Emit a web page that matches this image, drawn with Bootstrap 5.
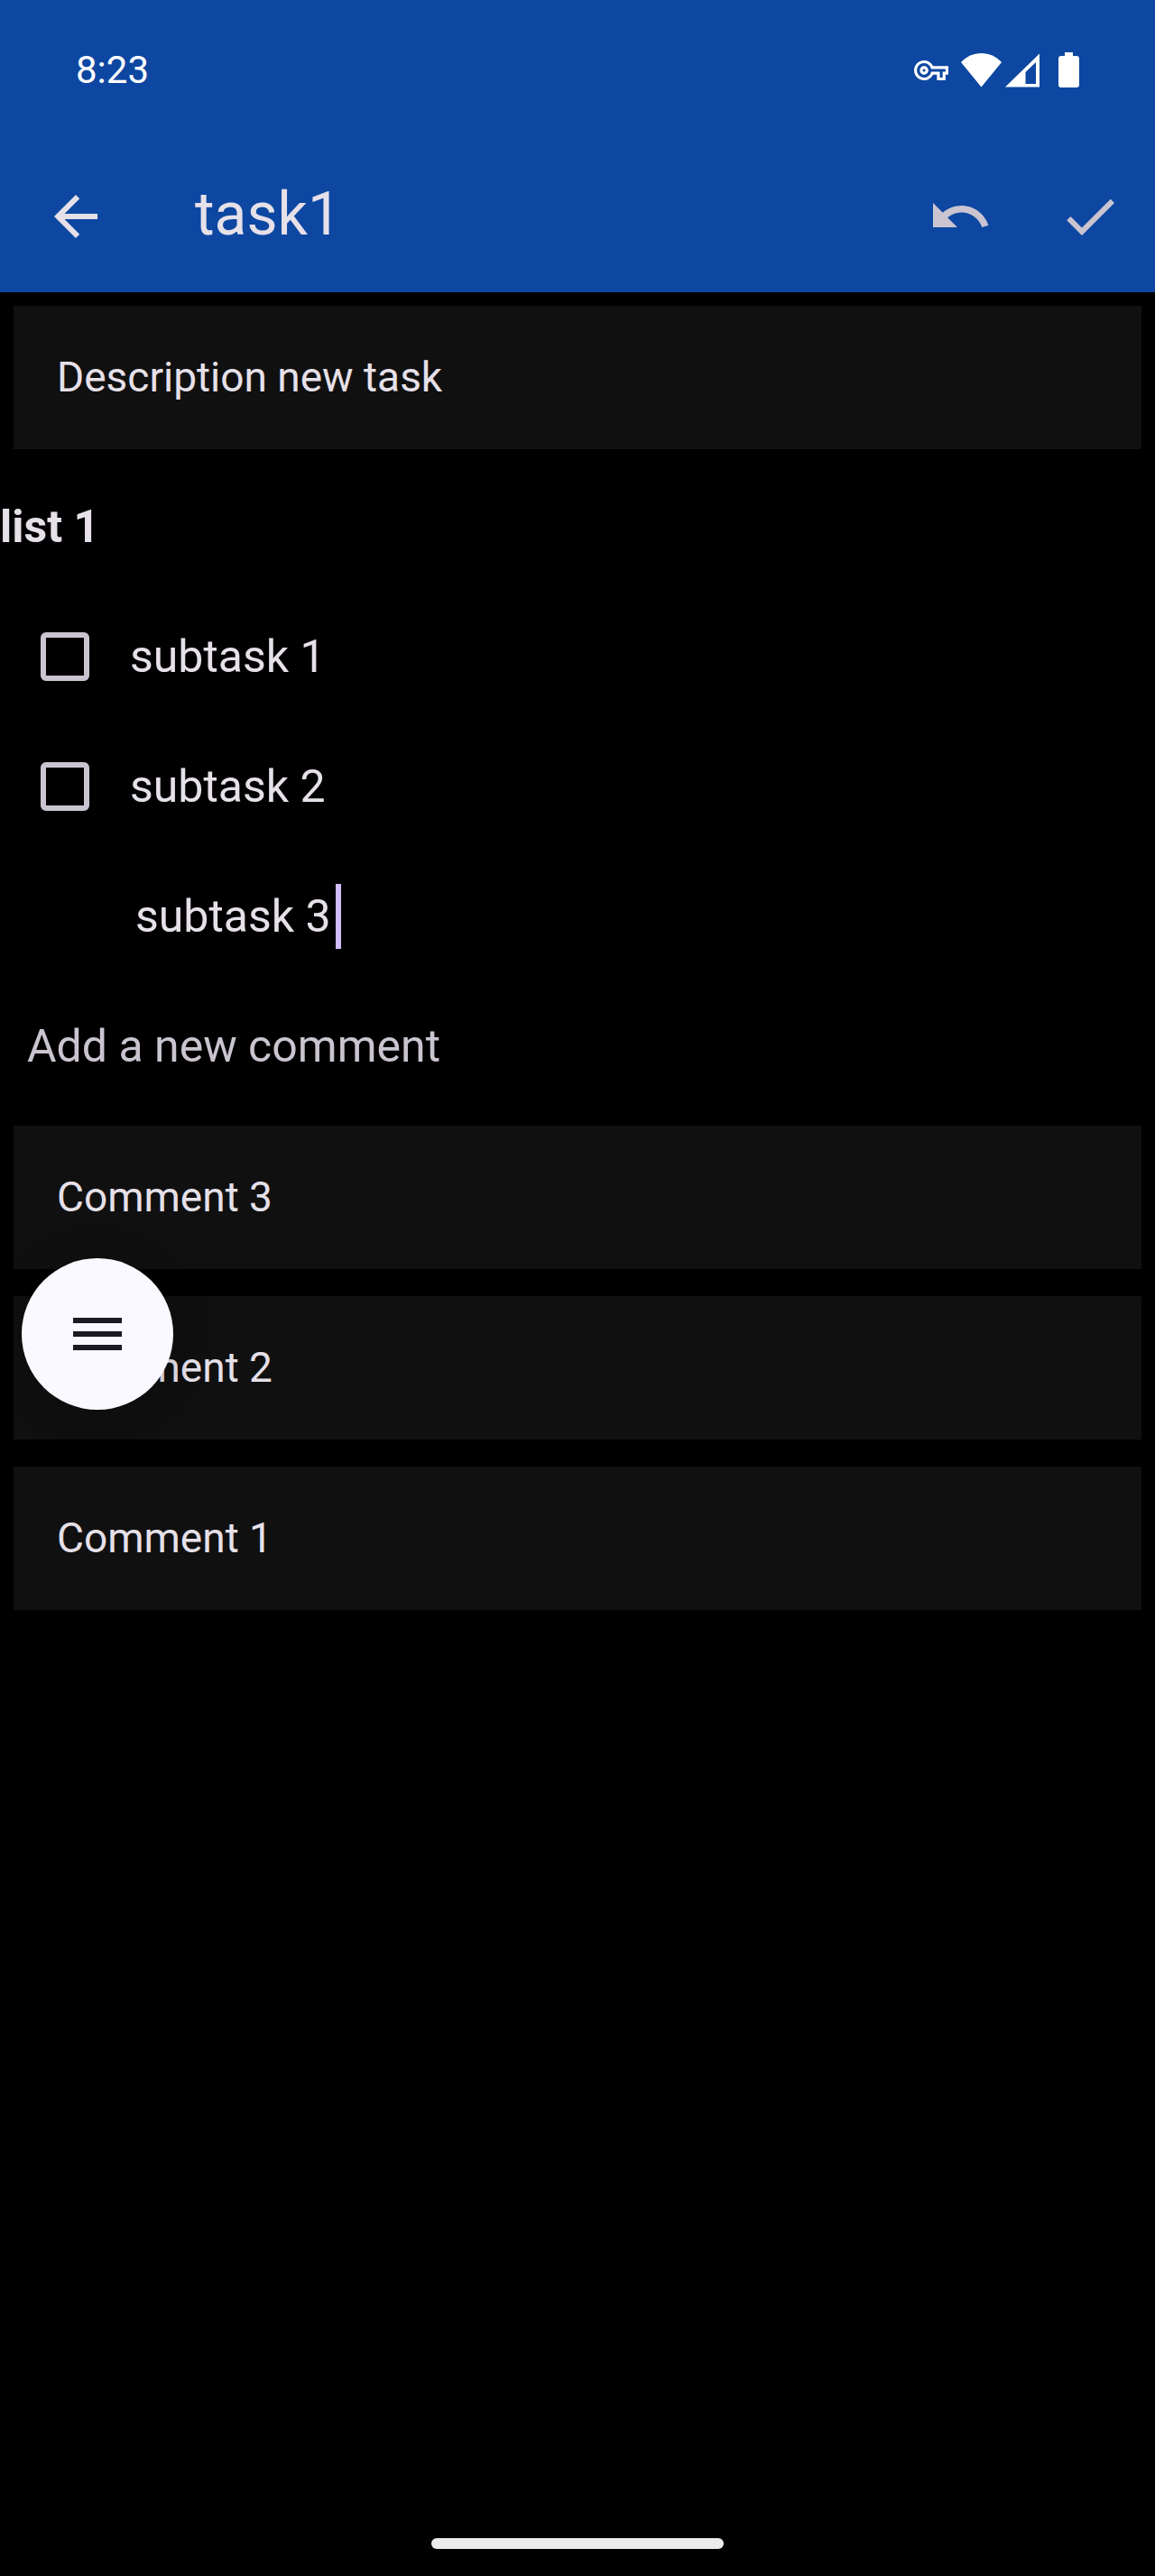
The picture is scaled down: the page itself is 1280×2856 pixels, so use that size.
<!DOCTYPE html>
<html lang="en">
<head>
<meta charset="utf-8">
<meta name="viewport" content="width=device-width, initial-scale=1">
<title>task1</title>
<link href="https://cdn.jsdelivr.net/npm/bootstrap@5.3.0/dist/css/bootstrap.min.css" rel="stylesheet">
<style>
  body { background: #000; color: #e6e0e9; font-family: Roboto, "Noto Sans", sans-serif; font-size: 50px; line-height: 72px; }
  .app-header { background: #0d47a1; }
  .status-bar { height: 156px; padding: 0 84px; color: #fff; font-size: 42px; }
  .gap-status { margin-left: 14px; }
  .toolbar { height: 168px; }
  .tool-btn { width: 144px; height: 144px; padding: 0; border: 0; color: #cac4d0; }
  .tool-btn.back { width: 168px; color: #e6e0e9; }
  .tool-btn svg, .fab svg { width: 72px; height: 72px; }
  .tool-title { font-size: 66px; line-height: 84px; padding: 0 0 4px 48px; }
  .note-card { background: #101010; border: 0; border-radius: 0; margin: 15px; padding: 48px; color: #e6e0e9; font-size: 46px; line-height: 63px; }
  .note-card + .note-card { margin-top: 30px; }
  .line-row { height: 144px; padding-bottom: 2px; }
  .list-title { font-size: 50px; line-height: 72px; }
  .subtask { padding-left: 45px; gap: 45px; }
  .subtask .form-check-input { width: 54px; height: 54px; border: 6px solid #cac4d0; border-radius: 6px; background-color: transparent; }
  .subtask .form-check-input:checked { background-color: #d0bcff; border-color: #d0bcff; }
  .subtask-edit { padding-left: 150px; }
  .plain-input, .plain-input:focus { background: transparent; border: 0; border-radius: 0; box-shadow: none; padding: 0; height: 72px; color: #e6e0e9; font-size: 50px; line-height: 72px; }
  .plain-input::placeholder { color: #cac4d0; opacity: 1; }
  .subtask-edit .plain-input { width: 222px; }
  .caret { width: 6px; height: 72px; background: #d0bcff; }
  .new-comment { padding-left: 30px; padding-right: 30px; }
  .fab { top: 162px; left: 24px; width: 168px; height: 168px; padding: 0; border: 0; background: #faf9ff; color: #1b1b21; box-shadow: 0 18px 30px rgba(0,0,0,.08), 0 3px 54px rgba(0,0,0,.1); }
  .fab:hover { background: #fff; color: #1b1b21; }
  .home-bar { width: 324px; height: 12px; margin-bottom: 30px; background: #ebebeb; }
</style>
</head>
<body class="d-flex flex-column min-vh-100">
<header class="app-header">
  <div class="status-bar d-flex align-items-center justify-content-between">
    <span>8:23</span>
    <div class="d-flex align-items-center">
      <svg width="38" height="38" viewBox="0 0 24 24" fill="currentColor" aria-hidden="true"><path d="M22 19h-6v-4h-2.68c-1.14 2.42-3.6 4-6.32 4-3.86 0-7-3.14-7-7s3.14-7 7-7c2.72 0 5.17 1.58 6.32 4H24v6h-2v4zm-4-2h2v-4h2v-2H11.94l-.23-.67C11.01 8.34 9.11 7 7 7c-2.76 0-5 2.24-5 5s2.24 5 5 5c2.11 0 4.01-1.34 4.71-3.33l.23-.67H18v4zM7 15c-1.65 0-3-1.35-3-3s1.35-3 3-3 3 1.35 3 3-1.35 3-3 3zm0-4c-.55 0-1 .45-1 1s.45 1 1 1 1-.45 1-1-.45-1-1-1z"/></svg>
      <svg class="gap-status" width="87" height="40" viewBox="0 0 87 40" fill="currentColor" aria-hidden="true"><path d="M0 11C6 4.500 14 1 22.500 1S39 4.500 45 11L22.500 38.500z"/><path fill-rule="evenodd" d="M87 1.500V38.500H49zM83 11L71.500 22V35H83z"/></svg>
      <svg width="44" height="40" viewBox="0 0 44 40" fill="currentColor" aria-hidden="true"><path d="M28 0h9v4h4a3 3 0 0 1 3 3v29a3 3 0 0 1-3 3H24a3 3 0 0 1-3-3V7a3 3 0 0 1 3-3h4z"/></svg>
    </div>
  </div>
  <nav class="toolbar d-flex align-items-center" aria-label="Task">
    <button type="button" class="btn tool-btn back" aria-label="Back"><svg viewBox="0 0 24 24" fill="currentColor"><path d="M20 11H7.830l5.590-5.590L12 4l-8 8 8 8 1.410-1.410L7.830 13H20z"/></svg></button>
    <h1 class="tool-title fw-normal mb-0 me-auto">task1</h1>
    <button type="button" class="btn tool-btn" aria-label="Undo"><svg viewBox="0 0 24 24" fill="currentColor"><path d="M12.500 8c-2.650 0-5.050.99-6.900 2.600L2 7v9h9l-3.620-3.620c1.390-1.160 3.160-1.880 5.120-1.880 3.540 0 6.550 2.310 7.600 5.500l2.370-.78C21.080 11.030 17.150 8 12.500 8z"/></svg></button>
    <button type="button" class="btn tool-btn" aria-label="Save"><svg viewBox="0 0 24 24" fill="currentColor"><path d="M9 16.170L4.830 12l-1.420 1.410L9 19 21 7l-1.410-1.410z"/></svg></button>
  </nav>
</header>

<main class="flex-grow-1">
  <div class="card note-card">Description new task</div>
  <div class="line-row d-flex align-items-center"><h2 class="list-title fw-bold mb-0">list 1</h2></div>
  <div class="line-row subtask d-flex align-items-center">
    <input class="form-check-input m-0" type="checkbox" id="sub1"><label for="sub1">subtask 1</label>
  </div>
  <div class="line-row subtask d-flex align-items-center">
    <input class="form-check-input m-0" type="checkbox" id="sub2"><label for="sub2">subtask 2</label>
  </div>
  <div class="line-row subtask-edit d-flex align-items-center">
    <input class="form-control plain-input" type="text" value="subtask 3" aria-label="New subtask"><span class="caret" aria-hidden="true"></span>
  </div>
  <div class="line-row new-comment d-flex align-items-center">
    <input class="form-control plain-input" type="text" placeholder="Add a new comment" aria-label="New comment">
  </div>
  <section class="position-relative" aria-label="Comments">
    <div class="d-flex flex-column">
      <div class="card note-card mb-0">Comment 3</div>
      <div class="card note-card mb-0">Comment 2</div>
      <div class="card note-card">Comment 1</div>
    </div>
    <button type="button" class="btn fab rounded-circle position-absolute" aria-label="Menu"><svg viewBox="0 0 24 24" fill="currentColor"><path d="M3 18h18v-2H3zm0-5h18v-2H3zm0-7v2h18V6z"/></svg></button>
  </section>
</main>
<div class="home-bar rounded-pill mx-auto"></div>
<script src="https://cdn.jsdelivr.net/npm/bootstrap@5.3.0/dist/js/bootstrap.bundle.min.js"></script>
</body>
</html>
